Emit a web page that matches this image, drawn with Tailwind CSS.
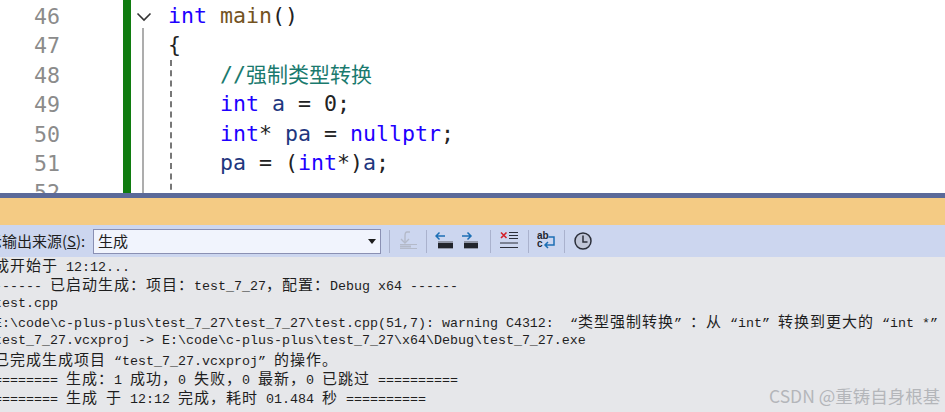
<!DOCTYPE html>
<html lang="zh"><head><meta charset="utf-8"><script src="https://cdn.jsdelivr.net/npm/@tailwindcss/browser@4"></script></head>
<body class="m-0 bg-white">
<div class="relative w-[945px] h-[412px] overflow-hidden flex flex-col">
  <div class="h-[193px] shrink-0 flex overflow-hidden bg-white font-['DejaVu_Sans_Mono',monospace] text-[21.6px] leading-[29.4px]">
    <div class="w-[60px] shrink-0 pt-[2px] text-right text-[#8b8b8b]">
      <div>46</div><div>47</div><div>48</div><div>49</div><div>50</div><div>51</div><div>52</div>
    </div>
    <div class="w-[8px] ml-[63px] shrink-0 bg-[#107c10]"></div>
    <div class="w-[37px] shrink-0 flex flex-col items-start pl-[5px]">
      <svg class="mt-[12px] shrink-0" width="16" height="10" viewBox="0 0 16 10"><path d="M1.5 1.5 L8 8 L14.5 1.5" fill="none" stroke="#333" stroke-width="1.6"/></svg>
      <div class="ml-[6px] mt-[6px] w-[2px] grow bg-[#adadad]"></div>
    </div>
    <div class="grow pt-[1px] text-[#222]">
      <div class="whitespace-pre"><span class="text-[#1f00ff]">int</span> <span class="text-[#74531f]">main</span>()</div>
      <div>{</div>
      <div class="ml-[2px] pl-[48px] border-l-2 border-dashed border-[#777] h-[140px] whitespace-pre"><div class="h-[29.4px] text-[#1a7a6e]">//<span class="font-['Noto_Sans_CJK_SC',sans-serif] text-[21px] leading-none">强制类型转换</span></div><div><span class="text-[#1f00ff]">int</span> <span class="text-[#1f377f]">a</span> = 0;</div><div><span class="text-[#1f00ff]">int</span>* <span class="text-[#1f377f]">pa</span> = <span class="text-[#1f00ff]">nullptr</span>;</div><div><span class="text-[#1f377f]">pa</span> = (<span class="text-[#1f00ff]">int</span>*)<span class="text-[#1f377f]">a</span>;</div></div>
    </div>
  </div>
  <div class="h-[5px] shrink-0 bg-[#5b6a99]"></div>
  <div class="h-[27px] shrink-0 bg-[#f4cb84]"></div>
  <div class="h-[32px] shrink-0 bg-[#ccd6ef] flex items-center overflow-hidden">
    <div class="w-[93px] shrink-0 -ml-[13px] whitespace-nowrap font-['Noto_Sans_CJK_SC',sans-serif] text-[15px] text-[#1e1e1e] flex"><span class="w-[15px] shrink-0 overflow-hidden">示</span><span>输出来源(<span class="underline">S</span>):</span></div>
    <div class="ml-[13px] w-[288px] h-[25px] shrink-0 border border-[#8a90b3] bg-[#f1f4fd] flex items-center justify-between pl-[4px] pr-[4px] font-['Noto_Sans_CJK_SC',sans-serif] text-[15px] text-[#1e1e1e]">
      <span>生成</span>
      <svg width="8" height="5" viewBox="0 0 8 5"><path d="M0 0H8L4 5Z" fill="#1e1e1e"/></svg>
    </div>
    <div class="flex items-center h-[23px] ml-[8px]">
      <div class="w-[1px] h-[23px] bg-[#aab2cd]"></div>
      <svg class="ml-[9px]" width="18" height="22" viewBox="0 0 18 22"><g fill="none" stroke="#b4bac9" stroke-width="1.4"><path d="M8 2H11M8 2C6 2 6 4 6 6V12"/><path d="M2 9L6 13L10 9"/></g><path d="M1 14H18V15H1ZM1 18H18V19H1Z" fill="#b4bac9"/><path d="M1 15.5H12V17.5H1Z" fill="#b4bac9"/></svg>
      <div class="ml-[9px] w-[1px] h-[23px] bg-[#aab2cd]"></div>
      <svg class="ml-[8px]" width="18" height="22" viewBox="0 0 18 22"><path d="M10 6H1M4.5 2.5L1 6L4.5 9.5" fill="none" stroke="#1c6fb5" stroke-width="1.5"/><path d="M3 11H18V19H3Z" fill="#9298a8"/><path d="M3 13H18V18H3Z" fill="#22252c"/></svg>
      <svg class="ml-[9px]" width="16" height="22" viewBox="0 0 16 22"><path d="M0 6H9M5.5 2.5L9 6L5.5 9.5" fill="none" stroke="#1c6fb5" stroke-width="1.5"/><path d="M2 11H16V19H2Z" fill="#9298a8"/><path d="M2 13H16V18H2Z" fill="#22252c"/></svg>
      <div class="ml-[12px] w-[1px] h-[23px] bg-[#aab2cd]"></div>
      <svg class="ml-[9px]" width="18" height="22" viewBox="0 0 18 22"><path d="M1 2.5L6.5 8M6.5 2.5L1 8" stroke="#d4202a" stroke-width="1.6"/><path d="M9 2.5H18M9 5.5H18M9 8.5H18M0 13H18M0 17.5H18" stroke="#2b2f3a" stroke-width="1.2"/></svg>
      <div class="ml-[10px] w-[1px] h-[23px] bg-[#aab2cd]"></div>
      <svg class="ml-[8px]" width="18" height="22" viewBox="0 0 18 22"><text x="0" y="9" font-family="Liberation Sans" font-weight="700" font-size="10" fill="#22262f">ab</text><text x="0" y="17" font-family="Liberation Sans" font-weight="700" font-size="10" fill="#22262f">c</text><path d="M11.5 7H17V15H8M11 12L8 15L11 18" fill="none" stroke="#1c6fb5" stroke-width="1.5"/></svg>
      <div class="ml-[9px] w-[1px] h-[23px] bg-[#aab2cd]"></div>
      <svg class="ml-[9px]" width="18" height="18" viewBox="0 0 18 18"><circle cx="9" cy="9" r="8" fill="#c0c6d8" stroke="#2b2f3a" stroke-width="1.5"/><path d="M9 3.5V10H13.5" fill="none" stroke="#2b2f3a" stroke-width="1.5"/></svg>
    </div>
  </div>
  <div class="grow bg-[#e6e7ea] overflow-hidden">
    <div class="-ml-[22px] w-[1000px] font-['Liberation_Mono',monospace] text-[13.33px] leading-[18.8px] text-[#1e1e1e] [&>div]:whitespace-pre [&>div]:h-[18.8px] [&_b]:font-['Noto_Sans_CJK_SC',sans-serif] [&_b]:font-normal [&_b]:text-[15px] [&_b]:leading-none [&_b]:tracking-[1px] [&_i]:not-italic [&_i]:inline-block [&_i]:w-[16px] [&_i]:text-left [&_em]:not-italic [&_em]:inline-block [&_em]:w-[16px] [&_em]:text-right">
      <div><b>生成开始于</b> 12:12...</div>
      <div>1&gt;------ <b>已启动生成：项目：</b>test_7_27<b>，配置：</b>Debug x64 ------</div>
      <div>1&gt;test.cpp</div>
      <div>1&gt;E:\code\c-plus-plus\test_7_27\test_7_27\test.cpp(51,7): warning C4312: <em>“</em><b>类型强制转换</b><i>”</i><b>：从</b><em>“</em>int<i>”</i><b>转换到更大的</b><em>“</em>int *<i>”</i></div>
      <div>1&gt;test_7_27.vcxproj -&gt; E:\code\c-plus-plus\test_7_27\x64\Debug\test_7_27.exe</div>
      <div>1&gt;<b>已完成生成项目</b><em>“</em>test_7_27.vcxproj<i>”</i><b>的操作。</b></div>
      <div>========== <b>生成：</b>1 <b>成功，</b>0 <b>失败，</b>0 <b>最新，</b>0 <b>已跳过</b> ==========</div>
      <div>========== <b>生成</b> <b>于</b> 12:12 <b>完成，耗时</b> 01.484 <b>秒</b> ==========</div>
    </div>
  </div>
  <div class="absolute left-[769px] top-[385px] whitespace-nowrap font-['Noto_Sans_CJK_SC',sans-serif] text-[17.5px] leading-[22px] text-[#b4b6ba]">CSDN @重铸自身根基</div>
</div>
</body></html>
